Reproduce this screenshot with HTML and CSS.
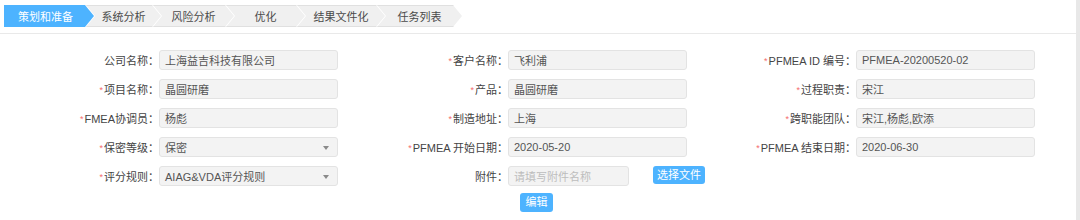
FILE: index.html
```html
<!DOCTYPE html>
<html lang="zh-CN">
<head>
<meta charset="utf-8">
<title>策划和准备</title>
<link rel="stylesheet" href="styles.css">
</head>
<body>
<div class="page">
  <div class="main">
    <div class="steps-bar">
      <div class="steps">
        <div class="step active">策划和准备</div>
        <div class="step">系统分析</div>
        <div class="step">风险分析</div>
        <div class="step">优化</div>
        <div class="step">结果文件化</div>
        <div class="step">任务列表</div>
      </div>
    </div>
    <div class="form">
      <div class="field"><div class="label">公司名称：</div><div class="input">上海益吉科技有限公司</div></div>
      <div class="field"><div class="label"><span class="req">*</span>客户名称：</div><div class="input">飞利浦</div></div>
      <div class="field"><div class="label"><span class="req">*</span>PFMEA ID 编号：</div><div class="input">PFMEA-20200520-02</div></div>

      <div class="field"><div class="label"><span class="req">*</span>项目名称：</div><div class="input">晶圆研磨</div></div>
      <div class="field"><div class="label"><span class="req">*</span>产品：</div><div class="input">晶圆研磨</div></div>
      <div class="field"><div class="label"><span class="req">*</span>过程职责：</div><div class="input">宋江</div></div>

      <div class="field"><div class="label"><span class="req">*</span>FMEA协调员：</div><div class="input">杨彪</div></div>
      <div class="field"><div class="label"><span class="req">*</span>制造地址：</div><div class="input">上海</div></div>
      <div class="field"><div class="label"><span class="req">*</span>跨职能团队：</div><div class="input">宋江,杨彪,欧添</div></div>

      <div class="field"><div class="label"><span class="req">*</span>保密等级：</div><div class="input select"><span>保密</span><span class="caret"></span></div></div>
      <div class="field"><div class="label"><span class="req">*</span>PFMEA 开始日期：</div><div class="input">2020-05-20</div></div>
      <div class="field"><div class="label"><span class="req">*</span>PFMEA 结束日期：</div><div class="input">2020-06-30</div></div>

      <div class="field"><div class="label"><span class="req">*</span>评分规则：</div><div class="input select"><span>AIAG&amp;VDA评分规则</span><span class="caret"></span></div></div>
      <div class="field"><div class="label">附件：</div><div class="input short placeholder">请填写附件名称</div><button class="btn file-btn" type="button">选择文件</button></div>
      <div class="field"></div>
    </div>
    <div class="actions"><button class="btn" type="button">编辑</button></div>
  </div>
  <div class="scrollbar"></div>
</div>
</body>
</html>
```

FILE: styles.css
```css
* { box-sizing: border-box; }
html, body { margin: 0; padding: 0; background: #fff; }
body {
  font-family: "Liberation Sans", "Noto Sans CJK SC", sans-serif;
  font-size: 11px;
  color: #444;
}
.page {
  display: flex;
  width: 1080px;
  height: 220px;
  overflow: hidden;
}
.main {
  flex: 1;
  display: flex;
  flex-direction: column;
}
.scrollbar {
  width: 4px;
  background: #e8e8e8;
}
.steps-bar {
  padding: 5px 0 6px 4px;
  border-bottom: 1px solid #e9e9e9;
}
.steps {
  display: flex;
  height: 22px;
}
.step {
  height: 22px;
  display: flex;
  align-items: center;
  justify-content: center;
  background: #f0f0f0;
  color: #4a4a4a;
  margin-left: -8px;
  box-shadow: inset 0 1px 0 #e0e0e0, inset 0 -1px 0 #e0e0e0;
  clip-path: polygon(0 0, calc(100% - 9px) 0, 100% 50%, calc(100% - 9px) 100%, 0 100%, 9px 50%);
}
.step:first-child {
  margin-left: 0;
  padding-right: 7px;
  clip-path: polygon(0 0, calc(100% - 9px) 0, 100% 50%, calc(100% - 9px) 100%, 0 100%);
}
.step:nth-child(1) { width: 90px; }
.step:nth-child(2) { width: 75px; }
.step:nth-child(3) { width: 81px; }
.step:nth-child(4) { width: 79px; }
.step:nth-child(5) { width: 88px; }
.step:nth-child(6) { width: 85px; }
.step.active {
  background: #4db3ff;
  color: #fff;
  box-shadow: none;
}
.form {
  margin-top: 16px;
  padding-left: 10px;
  display: grid;
  grid-template-columns: 349px 348px 348px;
  row-gap: 9px;
}
.field {
  display: flex;
  align-items: center;
  height: 20px;
}
.label {
  width: 149px;
  flex-shrink: 0;
  text-align: right;
  color: #444;
  white-space: nowrap;
}
.req {
  color: #f56c6c;
  font-size: 9px;
  margin-right: 1px;
  vertical-align: 1px;
}
.input {
  width: 179px;
  height: 20px;
  border: 1px solid #e3e3e3;
  border-radius: 3px;
  background: #f3f3f3;
  padding: 0 8px 0 5px;
  color: #555;
  display: flex;
  align-items: center;
  white-space: nowrap;
}
.input.short { width: 121px; }
.input.placeholder { color: #bdbdbd; }
.select { justify-content: space-between; }
.caret {
  width: 0;
  height: 0;
  border-left: 3px solid transparent;
  border-right: 3px solid transparent;
  border-top: 4px solid #8a8a8a;
  margin-top: 1px;
}
.btn {
  height: 19px;
  padding: 0 5px;
  border: none;
  border-radius: 3px;
  background: #4db3ff;
  color: #fff;
  font-family: inherit;
  font-size: 11px;
  line-height: 19px;
  cursor: pointer;
}
.file-btn {
  margin-left: 24px;
  height: 18px;
  line-height: 18px;
  margin-top: -3px;
  padding: 0 4px;
}
.actions {
  margin-top: 7px;
  display: flex;
  justify-content: center;
  padding-right: 3px;
}
.actions .btn { width: 33px; padding: 0; }
```
